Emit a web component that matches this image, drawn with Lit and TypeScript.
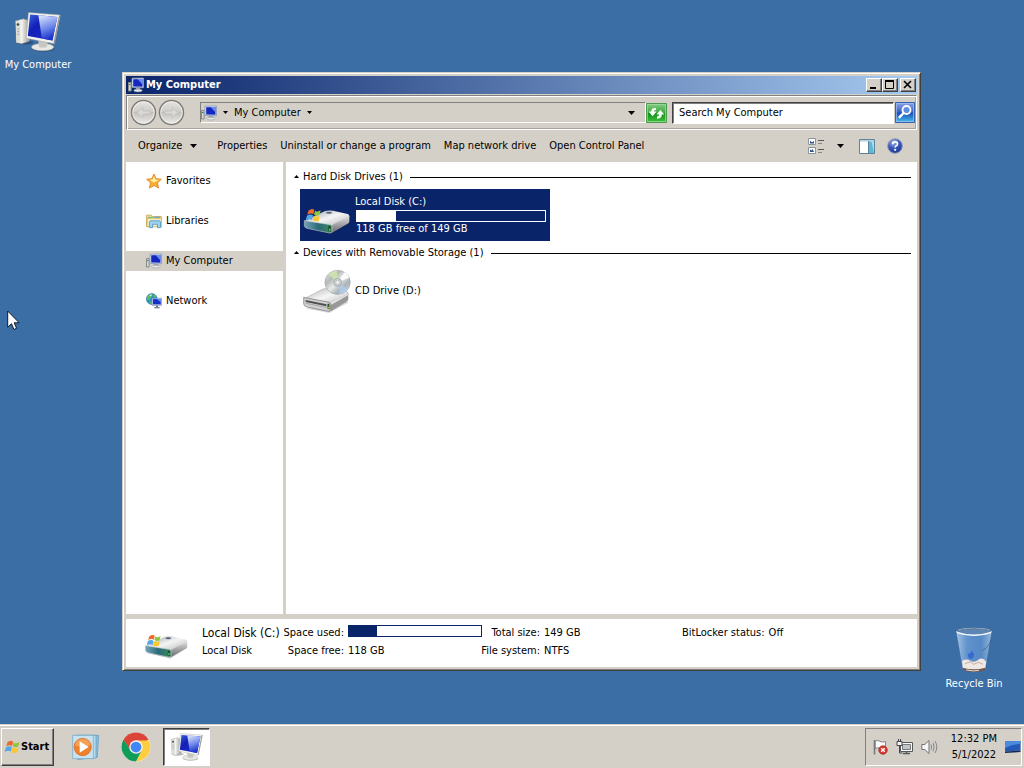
import { LitElement, html, svg, css } from "lit";
import { customElement, state } from "lit/decorators.js";

/* ---------- icons ---------- */

const computerLarge = (w: number, h: number) => html`<svg width=${w} height=${h} viewBox="46 34 140 120" aria-hidden="true">
  <defs>
    <linearGradient id="scr" x1="0" y1="0" x2="1" y2="1"><stop offset="0" stop-color="#3a62e0"/><stop offset=".35" stop-color="#1420b8"/><stop offset="1" stop-color="#1a2fc8"/></linearGradient>
    <linearGradient id="shine" x1="0" y1="0" x2=".3" y2="1"><stop offset="0" stop-color="#e4ecff"/><stop offset=".6" stop-color="#6c86e8"/><stop offset="1" stop-color="#1c34cc"/></linearGradient>
    <linearGradient id="tower" x1="0" x2="1"><stop offset="0" stop-color="#c9c9c4"/><stop offset=".4" stop-color="#f6f6f2"/><stop offset="1" stop-color="#9c9c98"/></linearGradient>
  </defs>
  <ellipse cx="76" cy="126" rx="26" ry="6" fill="#000" opacity=".25"/>
  <path d="M48 60L72 54L90 60V122L66 130L50 126Z" fill="url(#tower)" stroke="#8a8a86" stroke-width="1.5"/>
  <path d="M48 60L62 64V128L50 126Z" fill="#deded8"/>
  <circle cx="55" cy="71" r="4" fill="#3d4a44"/><path d="M52 84l7 2M52 92l7 2M52 100l7 2" stroke="#8c8c88" stroke-width="2"/>
  <ellipse cx="132" cy="145" rx="34" ry="9" fill="#000" opacity=".25"/>
  <ellipse cx="130" cy="140" rx="34" ry="11" fill="#e9e9e4" stroke="#a9a9a4" stroke-width="1.5"/>
  <path d="M116 118L146 124L142 141H120Z" fill="#c6c6c2"/>
  <path d="M87 35L184 42L166 130L80 113Z" fill="#f1f1ee" stroke="#a5a5a0" stroke-width="1.5"/>
  <path d="M184 42L180 44L163 128L166 130Z" fill="#8e8e8c"/>
  <path d="M92 41L175 48L160 120L85 106Z" fill="url(#scr)"/>
  <path d="M117 43L175 48L160 120L128 114Z" fill="url(#shine)"/>
</svg>`;

const computerSmall = html`<svg width="16" height="16" viewBox="0 0 16 16" aria-hidden="true">
  <path d="M.5 5.5h2.6v8.5H.5z" fill="#d5d9d2" stroke="#858c88"/><path d="M1 7.5h1.5" stroke="#3b7c54"/>
  <path d="M4 1.2L15.5 1v9.8L4 10.4z" fill="#dce6f8" stroke="#8796b8" stroke-width=".8"/>
  <path d="M5.2 2.2L14.5 2v7.8l-9.3-.4z" fill="#1428c0"/><path d="M9.5 2.1l5-.1v5.5z" fill="#6d8cf0"/>
  <path d="M8 11h4l.6 2H7.4z" fill="#9ea4a8"/><ellipse cx="10" cy="13.6" rx="4.2" ry="1.4" fill="#e6e8ea" stroke="#8e959c" stroke-width=".6"/>
</svg>`;

const flag = svg`
  <path d="M66 151C75 145 80 145 84 149L81 162C75 158 69 160 63 163Z" fill="#ee6a2c"/>
  <path d="M86 151C92 155 97 154 103 150L100 163C94 167 89 167 83 163Z" fill="#8fc63f"/>
  <path d="M62 166C68 162 74 161 80 165L77 179C71 175 65 176 58 180Z" fill="#55a6e8"/>
  <path d="M82 166C88 170 94 170 100 166L97 181C91 185 85 184 79 180Z" fill="#fbc62f"/>`;

const hardDrive = (w: number, h: number) => html`<svg width=${w} height=${h} viewBox="50 140 144 84" aria-hidden="true">
  <defs>
    <linearGradient id="hdTop" x1="0" y1="0" x2="1" y2="1"><stop offset="0" stop-color="#8f999f"/><stop offset=".5" stop-color="#f4f4f4"/><stop offset="1" stop-color="#b4b6ba"/></linearGradient>
    <linearGradient id="hdFront" x1="0" x2="1"><stop offset="0" stop-color="#73a3b8"/><stop offset=".5" stop-color="#2b6b7a"/><stop offset="1" stop-color="#3f8a5c"/></linearGradient>
    <linearGradient id="hdSide" x1="0" y1="0" x2="0" y2="1"><stop offset="0" stop-color="#e2e2e2"/><stop offset="1" stop-color="#66686c"/></linearGradient>
  </defs>
  <path d="M56 204L134 222L190 188L180 184L130 212Z" fill="#000" opacity=".22"/>
  <path d="M55 182L116 152Q126 149 140 151L184 161Q190 163 189 169L136 197Z" fill="url(#hdTop)"/>
  <path d="M136 195L189 167V184Q188 188 184 190L138 217Q132 219 133 210Z" fill="url(#hdSide)"/>
  <path d="M54 181L132 193Q137 195 137 200V214Q136 219 130 218L62 204Q55 202 54 196Z" fill="url(#hdFront)" stroke="#b8c6ca" stroke-width="2"/>
  <path d="M126 197h7v17l-7-2z" fill="#174d30"/><path d="M128 205h4v6h-4z" fill="#5bd65a"/>
  <ellipse cx="128" cy="157" rx="9" ry="3" fill="#56657c"/>
  ${flag}
</svg>`;

const cdDrive = html`<svg width="48" height="44" viewBox="52 329 147 135" aria-hidden="true">
  <defs>
    <linearGradient id="cd" x1="0" y1="0" x2="1" y2="1"><stop offset="0" stop-color="#eceeec"/><stop offset=".3" stop-color="#b4b9b7"/><stop offset=".5" stop-color="#e8ebe9"/><stop offset=".7" stop-color="#a9b4ba"/><stop offset="1" stop-color="#dcdce2"/></linearGradient>
    <linearGradient id="cdTop" x1="0" y1="0" x2="1" y2="1"><stop offset="0" stop-color="#b4b4b4"/><stop offset=".5" stop-color="#f6f6f6"/><stop offset="1" stop-color="#b4b4b4"/></linearGradient>
  </defs>
  <path d="M60 450L132 464L192 432L180 424Z" fill="#000" opacity=".15"/>
  <path d="M56 420L112 391Q120 388 132 390L184 398Q192 400 191 406L136 437Z" fill="url(#cdTop)" stroke="#969696" stroke-width="1.5"/>
  <ellipse cx="158" cy="370" rx="39" ry="37" fill="url(#cd)" stroke="#949a9a" stroke-width="1.5"/>
  <path d="M158 370L130 345Q142 334 156 334Z" fill="#d0e8ac" opacity=".8"/><path d="M158 370L190 391Q180 404 166 406Z" fill="#b0cce8" opacity=".8"/><path d="M158 370L194 356Q190 344 180 338Z" fill="#fff" opacity=".9"/>
  <circle cx="158" cy="370" r="12" fill="#d0d4d4" stroke="#8c9194" stroke-width="2"/><circle cx="158" cy="370" r="5" fill="#fff" stroke="#888" stroke-width="1"/>
  <path d="M136 432L191 404V422Q190 427 184 430L140 457Q134 460 134 450Z" fill="#989898"/>
  <path d="M136 432L191 404V409L136 440Z" fill="#e2e2e2"/>
  <path d="M54 416L132 431Q137 433 137 438V454Q136 460 130 459L62 445Q55 443 54 436Z" fill="#d0d0d0" stroke="#707070" stroke-width="2"/>
  <path d="M60 424L124 437V443L60 430Z" fill="#505050"/><path d="M60 434L124 447" stroke="#909090" stroke-width="2"/>
  <path d="M127 436h6v17l-6-2z" fill="#2d4a26"/><path d="M128 445h4v5h-4z" fill="#8dd84a"/>
</svg>`;

const star = html`<svg width="16" height="16" viewBox="0 0 16 16" aria-hidden="true"><path d="M8 1l2.1 4.7 5.2.6-3.8 3.5 1 5.2L8 12.5 3.5 15l1-5.2L.7 6.3l5.2-.6z" fill="#fbb034" stroke="#df8326" stroke-width=".9"/><path d="M8 3.2l1.4 3.3 3.4.4L8 9.5 3.4 6.9l3.2-.4z" fill="#fff0a0"/></svg>`;

const libraries = html`<svg width="16" height="16" viewBox="0 0 16 16" aria-hidden="true"><path d="M.6 14V2.2h4.8l1 1.3h9V6" fill="#f5e2a0" stroke="#c7a957" stroke-width=".9"/><path d="M1 5.2h14.4v8.6H1z" fill="#f9edbd" stroke="#c7a957" stroke-width=".8"/><path d="M2 4.3h5" stroke="#6eb568"/><path d="M8 4.3h6" stroke="#5e9dd4"/><path d="M3.4 14.7V9.2q0-1.4 1.4-1.4h8.3q1.4 0 1.4 1.4v5.5h-3v-3.4h-5v3.4z" fill="#9ad2f2" stroke="#4b93c6" stroke-width=".8"/></svg>`;

const network = html`<svg width="16" height="16" viewBox="0 0 16 16" aria-hidden="true"><circle cx="5.8" cy="6" r="5.4" fill="#2c8fd0" stroke="#2470a4" stroke-width=".6"/><path d="M2 2.600Q4 .8 6.400 1L6 3.400 4 5l-.4 2.600L1 6.400Q.8 4 2 2.600zM7.500 1.200q2 .6 3 2.400L8 4.400zM3 8.400l2.600.4.6 2.400Q4 11 3 8.400z" fill="#5fc256"/><path d="M3.500 2.200Q5 1.300 6 1.800L4.800 3.200z" fill="#e4f8e4"/><path d="M6 5.300h9.600v7H6z" fill="#dbe6fb" stroke="#7286ac" stroke-width=".7"/><path d="M6.900 6.100h7.900v5.300H6.900z" fill="#1431c8"/><path d="M11 6.100h3.800v3.400z" fill="#7292f0"/><path d="M10 12.500h2v1.600h1.600v1.200H8.400v-1.200H10z" fill="#6d7c94"/></svg>`;

const orb = (right: boolean) => html`<svg width="27" height="27" viewBox="0 0 27 27" aria-hidden="true">
  <defs><linearGradient id="orb" x1="0" y1="0" x2="0" y2="1"><stop offset="0" stop-color="#e6e5e2"/><stop offset=".45" stop-color="#cfcdc9"/><stop offset=".5" stop-color="#c2c0bc"/><stop offset="1" stop-color="#eeedea"/></linearGradient></defs>
  <circle cx="13.5" cy="13.5" r="12" fill="url(#orb)" stroke="#7d7c79" stroke-width="1.4"/><circle cx="13.5" cy="13.5" r="10.7" fill="none" stroke="#f2f1ee" stroke-width=".9"/>
  <path d=${right ? "M7 12h7V8.500l6 5-6 5V15H7z" : "M20 12h-7V8.500l-6 5 6 5V15h7z"} fill="#dad8d5" stroke="#bebcb8" stroke-width=".7"/></svg>`;

const refresh = html`<svg width="21" height="20" viewBox="0 0 21 20" aria-hidden="true"><defs><linearGradient id="rf" x1="0" y1="0" x2="0" y2="1"><stop offset="0" stop-color="#86ce86"/><stop offset=".48" stop-color="#3fa840"/><stop offset=".52" stop-color="#15901a"/><stop offset="1" stop-color="#3cc43a"/></linearGradient></defs>
  <path d="M.5.5h20v19H.5z" fill="url(#rf)" stroke="#4c9a4c"/><path d="M1.500 1.500h18v17h-18z" fill="none" stroke="#a6dca4" stroke-width=".7"/>
  <path d="M10 5Q5.200 4.200 5.200 8.600H2.600l4 4.600 4-4.600H7.900Q7.900 6.800 10 7zM11 15.600q4.800.4 4.800-4h2.600l-4-4.600-4 4.600h2.700q0 2-2.100 2z" fill="#f6fff4"/></svg>`;

const searchIcon = html`<svg width="20" height="21" viewBox="0 0 20 21" aria-hidden="true"><defs><linearGradient id="sg" x1="0" y1="0" x2="0" y2="1"><stop offset="0" stop-color="#8ba6e8"/><stop offset=".48" stop-color="#3a62c4"/><stop offset=".52" stop-color="#1b4bb4"/><stop offset="1" stop-color="#48c4ee"/></linearGradient></defs>
  <path d="M.5.5h19v20H.5z" fill="url(#sg)" stroke="#3b62ac"/><path d="M1.500 1.500h17v18h-17z" fill="none" stroke="#a5bdf0" stroke-width=".7"/>
  <circle cx="11.500" cy="8" r="4" fill="#5f8fe0" stroke="#fff" stroke-width="1.800"/><path d="M8.600 11L4.600 15.200" stroke="#fff" stroke-width="2.400" stroke-linecap="round"/></svg>`;

const viewIcon = html`<svg width="17" height="16" viewBox="0 0 17 16" aria-hidden="true"><path d="M.5.5h7v6h-7zM.5 9.500h7v6h-7z" fill="#fff" stroke="#8c949c"/><path d="M2 5.500v-3l1.500 1.500h1.200l1.300-1v2.500zM2 14v-2.500l1.500 1 1-1.500 1.500 3z" fill="#2f4f86"/><path d="M10 2.500h6M10 11.500h6" stroke="#55595e"/><path d="M10 5.500h4M10 14.500h4" stroke="#85898e"/></svg>`;

const paneIcon = html`<svg width="16" height="15" viewBox="0 0 16 15" aria-hidden="true"><path d="M.5.5h15v14H.5z" fill="#fff" stroke="#5d8299"/><path d="M1 1h14v1.600H1z" fill="#b4d4e4"/><path d="M10 2.500h5V14h-5z" fill="#5cb8d4"/><path d="M12.500 2.500H15V14z" fill="#a4e0ee"/><path d="M9.500 2v12" stroke="#5d8299"/></svg>`;

const helpIcon = html`<svg width="16" height="16" viewBox="0 0 16 16" aria-hidden="true"><defs><radialGradient id="hp" cx=".4" cy=".25" r=".8"><stop offset="0" stop-color="#a8b8ec"/><stop offset=".5" stop-color="#3a56ba"/><stop offset="1" stop-color="#1c3490"/></radialGradient></defs><circle cx="8" cy="8" r="7.300" fill="url(#hp)" stroke="#8c98b8"/><path d="M5.600 6.200Q5.700 3.900 8.100 3.900q2.400 0 2.400 2 0 1.200-1.400 2-.9.600-.9 1.600" fill="none" stroke="#fff" stroke-width="1.600"/><circle cx="8.200" cy="11.800" r="1.100" fill="#fff"/></svg>`;

const mediaPlayer = html`<svg width="28" height="26" viewBox="218 60 84 78" aria-hidden="true">
  <path d="M236 64l62 0-4 66-56 6z" fill="#8fc0de" stroke="#5d98c0" stroke-width="2"/><path d="M228 64h62v68l-58 3z" fill="#b6daee" stroke="#5d98c0" stroke-width="2"/><path d="M220 64h62v70h-62z" fill="#c8e2f0" stroke="#6da4c8" stroke-width="2"/>
  <circle cx="250" cy="99" r="26" fill="#f0812c" stroke="#d4661c" stroke-width="2"/><path d="M226 94A25 25 0 0 1 274 92Q250 104 226 94Z" fill="#f8a860" opacity=".8"/><path d="M241 82L268 99L241 116Z" fill="#fff"/></svg>`;

const chrome = html`<svg width="30" height="30" viewBox="0 0 48 48" aria-hidden="true">
  <circle cx="24" cy="24" r="23" fill="#fff"/>
  <path d="M24 24L4.080 12.500A23 23 0 0 1 43.920 12.500Z" fill="#db4437"/><path d="M24 13.500H44.400A23 23 0 0 1 24 47L33.100 29.300Z" fill="#ffcd40"/><path d="M4.080 12.500A23 23 0 0 0 24 47L33.100 29.300L24 24L14.900 29.300Z" fill="#0f9d58"/><path d="M4.080 12.500H24V24L14.900 29.300Z" fill="#db4437"/><path d="M4.080 12.500L14.900 29.300L10 30L2 18Z" fill="#0f9d58"/>
  <circle cx="24" cy="24" r="10.800" fill="#f1f1f1"/><circle cx="24" cy="24" r="8.600" fill="#4285f4"/></svg>`;

const startFlag = html`<svg width="16" height="16" viewBox="56 143 49 44" aria-hidden="true">${flag}</svg>`;

const trayFlag = html`<svg width="16" height="16" viewBox="0 0 16 16" aria-hidden="true"><path d="M2.500 1v14.500" stroke="#77797c" stroke-width="1.600"/><path d="M3.300 2Q6 .800 8 2.300t5.500.200v7Q10.500 11 8 9.400t-4.700.2z" fill="#fafafa" stroke="#77797c" stroke-width=".9"/><circle cx="11" cy="11" r="4.300" fill="#d8362e" stroke="#9c1e1a" stroke-width=".6"/><path d="M9.200 9.200l3.600 3.600M12.800 9.200l-3.600 3.600" stroke="#fff" stroke-width="1.400"/></svg>`;
const trayNet = html`<svg width="17" height="16" viewBox="0 0 17 16" aria-hidden="true"><path d="M4.500 3.500h12v9h-12z" fill="#f8f8f8" stroke="#55585b"/><path d="M6.500 5.500h8v5h-8z" fill="#c4c4c4" stroke="#77797c"/><path d="M7 14.500h7M10.500 12.500v2" stroke="#55585b" stroke-width="1.400"/><path d="M1 2.500h5v4H1z" fill="#f4f4f4" stroke="#44474a"/><path d="M2.500 0v2.500M4.500 0v2.500M3.500 6.500v7.500h3" fill="none" stroke="#44474a"/></svg>`;
const traySound = html`<svg width="17" height="16" viewBox="0 0 17 16" aria-hidden="true"><path d="M.8 5.500h3L8 1.500v13l-4.200-4h-3z" fill="#f6f6f6" stroke="#707376" stroke-width="1"/><path d="M10 5.500q1.400 2.500 0 5M12 3.700q2.400 4.300 0 8.600M14 2q3.600 6 0 12" fill="none" stroke="#85888b" stroke-width="1"/></svg>`;
const showDesktop = html`<svg width="16" height="14" viewBox="0 0 16 14" aria-hidden="true"><path d="M0 1h15.500v9.500L0 11.500z" fill="#2459b8"/><path d="M0 1h15.500v3Q8 4 0 8z" fill="#4d8ade"/><path d="M0 11.500l15.500-1v1.600L0 13z" fill="#12284e"/></svg>`;

const bin = html`<svg width="38" height="46" viewBox="78 46 114 138" aria-hidden="true">
  <defs><linearGradient id="bn" x1="0" x2="1"><stop offset="0" stop-color="#b9d2ec" stop-opacity=".85"/><stop offset=".3" stop-color="#6a9cd8" stop-opacity=".8"/><stop offset=".7" stop-color="#5c90cc" stop-opacity=".8"/><stop offset="1" stop-color="#a6c4e2" stop-opacity=".85"/></linearGradient></defs>
  <path d="M82 60L102 174Q135 186 168 174L188 60Z" fill="url(#bn)"/>
  <path d="M99 148Q112 140 124 147T148 144T172 150L168 172Q135 184 102 172Z" fill="#efe7e2"/><path d="M108 156l16-6 10 8 14-6 14 6" fill="none" stroke="#c4aca4" stroke-width="3"/>
  <path d="M101 168Q135 178 169 168L168 176Q135 188 102 176Z" fill="#6c5a54"/><path d="M112 175Q135 180 150 176" stroke="#e6dcd8" stroke-width="3" fill="none"/>
  <path d="M116 128l10-6 10 6-4 12-12 2z" fill="#2c5cd0" opacity=".75"/><path d="M128 118l4 8" stroke="#2c5cd0" stroke-width="3"/>
  <path d="M186 84Q180 108 160 116" stroke="#39588a" stroke-width="2" fill="none"/>
  <ellipse cx="135" cy="60" rx="53" ry="10" fill="#5d86b4" stroke="#c9d8e6" stroke-width="3"/><path d="M84 62Q135 80 186 62" fill="none" stroke="#f4f8fb" stroke-width="4"/><path d="M83 57Q135 44 187 57" stroke="#4a5e74" stroke-width="2" fill="none"/></svg>`;

const cursor = html`<svg class="cursor" width="14" height="22" viewBox="0 0 14 22" aria-hidden="true"><path d="M.7 1v16.200l3.800-3.500 2.400 5.800 2.700-1.200-2.400-5.500h5z" fill="#fff" stroke="#101828" stroke-width="1"/></svg>`;

const down = html`<svg width="7" height="4" viewBox="0 0 7 4" aria-hidden="true"><path d="M0 0h7L3.500 4z"/></svg>`;
const downSmall = html`<svg width="5" height="3" viewBox="0 0 5 3" aria-hidden="true"><path d="M0 0h5L2.500 3z"/></svg>`;
const up = html`<svg width="5" height="3" viewBox="0 0 5 3" aria-hidden="true"><path d="M0 3h5L2.500 0z"/></svg>`;

@customElement("app-root")
export class AppRoot extends LitElement {
  static styles = css`
    :host { display: flex; flex-direction: column; height: 100vh; min-height: 400px; overflow: hidden; background: #3b6ea5; color: #000; font: 11px/16px "DejaVu Sans Condensed", "Noto Sans", sans-serif; cursor: default; }
    * { box-sizing: border-box; }
    svg { display: block; flex: none; }
    button { font: inherit; color: inherit; border: 0; padding: 0; margin: 0; background: none; display: flex; align-items: center; white-space: nowrap; }
    a { color: inherit; text-decoration: none; }
    ul { list-style: none; margin: 0; padding: 0; }
    h1, h2 { font: inherit; margin: 0; }
    .desktop { position: relative; flex: 1; min-height: 0; }
    .shortcut { position: absolute; width: 76px; flex-direction: column; gap: 5px; color: #fff; }
    .pc { left: 0; top: 12px; }
    .trash { right: 12px; bottom: 32px; gap: 3px; }
    .cursor { position: absolute; left: 7px; top: 310px; }

    .window { position: absolute; inset: 72px 103px 53px 122px; display: flex; flex-direction: column; padding: 3px 3px 3px 3px; background: #d4d0c8; border: 1px solid; border-color: #d4d0c8 #404040 #404040 #d4d0c8; box-shadow: inset 1px 1px #fff, inset -1px -1px #808080; }
    .title { display: flex; align-items: center; gap: 2px; height: 18px; flex: none; padding: 0 1px 0 2px; color: #fff; background: linear-gradient(90deg, #0a246a, #a6caf0); }
    .title h1 { flex: 1; font-weight: 700; }
    .wins { display: flex; }
    .win { width: 16px; height: 14px; background: #d4d0c8; border: 1px solid; border-color: #fff #404040 #404040 #fff; box-shadow: inset -1px -1px #808080; justify-content: center; }
    .close { margin-left: 2px; }

    .address { display: flex; align-items: center; flex: none; height: 35px; margin-top: 1px; padding: 0 1px 0 3px; border: 1px solid; border-color: #808080 #fff #fff #808080; box-shadow: inset 1px 1px #fff, inset -1px -1px #a8a49c; }
    .orbs { display: flex; gap: 1px; margin-right: 15px; }
    .crumbs { flex: 1; display: flex; align-items: center; height: 21px; padding: 0 10px 0 0; gap: 6px; border: 1px solid; border-color: #808080 #fff #fff #808080; }
    .push { margin-left: auto; }
    .refresh { margin: 0 5px 0 0; }
    .search { display: flex; align-items: center; flex: 0 1 243px; gap: 1px; }
    .search input { flex: 1; min-width: 0; height: 22px; font: inherit; color: #000; background: #fff; border: 1px solid; border-color: #404040 #fff #fff #404040; box-shadow: inset 1px 1px #808080; padding: 0 6px; outline: 0; border-radius: 0; }
    .search input::placeholder { color: #000; opacity: 1; }

    .commands { display: flex; align-items: center; flex: none; height: 32px; padding: 0 14px 0 12px; gap: 13px; }
    .organize { gap: 8px; margin-right: 7px; }
    .tools { display: flex; align-items: center; gap: 12px; margin-left: auto; }
    .more { margin-right: 3px; }

    .main { flex: 1; display: flex; min-height: 0; background: #fff; }
    .nav { flex: none; width: 160px; padding-top: 9px; border-right: 3px solid #d4d0c8; }
    .nav ul { display: flex; flex-direction: column; gap: 20px; }
    .nav a { display: flex; align-items: center; gap: 4px; height: 20px; padding-left: 20px; }
    .nav a.current { background: #d4d0c8; }
    .files { flex: 1; min-width: 0; padding: 3px 6px 0 8px; }
    .group { display: flex; align-items: center; height: 24px; gap: 4px; }
    .group svg { margin-bottom: 2px; }
    .group::after { content: ""; flex: 1; height: 1px; margin-left: 3px; background: #000; }
    .item { width: 250px; height: 52px; margin-left: 6px; padding: 0 4px 0 3px; gap: 4px; text-align: left; }
    .item.selected { background: #0a246a; color: #fff; }
    .item.selected svg { align-self: flex-end; margin-bottom: 6px; }
    .info { display: flex; flex-direction: column; flex: 1; }
    .info .bar { margin: 0 0 0 1px; }
    .bar { display: block; height: 12px; border: 1px solid currentColor; }
    .fill { display: block; height: 100%; background: currentColor; }
    .free { padding-left: 1px; margin-top: -1px; }

    .details { flex: none; display: flex; align-items: center; height: 53px; padding: 0 0 3px 18px; background: #fff; border-top: 5px solid #d4d0c8; }
    .details > svg { margin-top: 8px; }
    .facts { display: grid; grid-template-columns: 78px 60px 134px 54px 134px auto 1fr; column-gap: 4px; row-gap: 2px; align-items: center; flex: 1; padding-left: 13px; }
    .facts > * { white-space: nowrap; }
    .name { font-size: 12px; }
    .label { justify-self: end; }
    .facts .bar { align-self: start; color: #0a246a; }
    .kind { grid-column: 1; }

    .taskbar { display: flex; align-items: center; flex: none; height: 44px; padding: 3px 2px 2px 1px; background: #d4d0c8; border-top: 1px solid #d4d0c8; box-shadow: inset 0 1px #fff; }
    .start { align-self: stretch; width: 53px; padding: 0 2px; gap: 1px; font-weight: 700; border: 1px solid; border-color: #fff #404040 #404040 #fff; box-shadow: inset -1px -1px #808080; }
    .quick { display: flex; align-self: stretch; margin-left: 7px; }
    .task { width: 50px; justify-content: center; }
    .active { width: 47px; margin-left: 2px; background: #fff; border: 1px solid; border-color: #404040 #fff #fff #404040; box-shadow: inset 1px 1px #808080; }
    .tray { margin-left: auto; align-self: stretch; display: flex; align-items: center; gap: 8px; padding: 0 0 0 6px; border: 1px solid; border-color: #808080 #fff #fff #808080; }
    .clock { text-align: center; margin-left: 5px; }
  `;

  @state() private place = "My Computer";
  @state() private query = "";

  private places = [
    { name: "Favorites", icon: star },
    { name: "Libraries", icon: libraries },
    { name: "My Computer", icon: computerSmall },
    { name: "Network", icon: network },
  ];

  render() {
    return html`
      <main class="desktop">
        <button class="shortcut pc">${computerLarge(46, 40)}<span>My Computer</span></button>
        <button class="shortcut trash">${bin}<span>Recycle Bin</span></button>
        <section class="window" aria-label="My Computer">
          <header class="title">
            ${computerSmall}
            <h1>My Computer</h1>
            <div class="wins">
              <button class="win" aria-label="Minimize"><svg width="10" height="10"><path d="M1 7h6v2H1z"/></svg></button>
              <button class="win" aria-label="Maximize"><svg width="10" height="10"><path d="M.5 1.500h8v7h-8z" fill="none" stroke="#000"/><path d="M0 0h9v2H0z"/></svg></button>
              <button class="win close" aria-label="Close"><svg width="10" height="10"><path d="M1 1l7 7M8 1l-7 7" stroke="#000" stroke-width="1.600"/></svg></button>
            </div>
          </header>
          <div class="address">
            <div class="orbs">
              <button aria-label="Back">${orb(false)}</button>
              <button aria-label="Forward">${orb(true)}</button>
            </div>
            <nav class="crumbs" aria-label="Address">
              ${computerSmall}
              <button aria-label="Roots">${downSmall}</button>
              <a href="#computer">My Computer</a>
              <button aria-label="Folders">${downSmall}</button>
              <button class="push" aria-label="Previous locations">${down}</button>
            </nav>
            <button class="refresh" aria-label="Refresh">${refresh}</button>
            <div class="search">
              <input type="text" aria-label="Search" placeholder="Search My Computer" .value=${this.query}
                @input=${(e: Event) => (this.query = (e.target as HTMLInputElement).value)} />
              <button aria-label="Search">${searchIcon}</button>
            </div>
          </div>
          <div class="commands">
            <button class="organize">Organize ${down}</button>
            <button>Properties</button>
            <button>Uninstall or change a program</button>
            <button>Map network drive</button>
            <button>Open Control Panel</button>
            <div class="tools">
              <button aria-label="Change view">${viewIcon}</button>
              <button class="more" aria-label="More views">${down}</button>
              <button aria-label="Preview pane">${paneIcon}</button>
              <button aria-label="Help">${helpIcon}</button>
            </div>
          </div>
          <div class="main">
            <nav class="nav" aria-label="Places">
              <ul>
                ${this.places.map((p) => html`<li><a href="#" class=${p.name === this.place ? "current" : ""}
                  @click=${(e: Event) => { e.preventDefault(); this.place = p.name; }}>${p.icon}${p.name}</a></li>`)}
              </ul>
            </nav>
            <div class="files">
              <h2 class="group">${up}Hard Disk Drives (1)</h2>
              <button class="item selected">
                ${hardDrive(48, 28)}
                <span class="info">
                  <span>Local Disk (C:)</span>
                  <span class="bar"><span class="fill" style="width:21%"></span></span>
                  <span class="free">118 GB free of 149 GB</span>
                </span>
              </button>
              <h2 class="group">${up}Devices with Removable Storage (1)</h2>
              <button class="item">${cdDrive}<span>CD Drive (D:)</span></button>
            </div>
          </div>
          <footer class="details">
            ${hardDrive(45, 26)}
            <div class="facts">
              <span class="name">Local Disk (C:)</span>
              <span class="label">Space used:</span>
              <span class="bar"><span class="fill" style="width:21%"></span></span>
              <span class="label">Total size:</span>
              <span>149 GB</span>
              <span class="label">BitLocker status:</span>
              <span>Off</span>
              <span class="kind">Local Disk</span>
              <span class="label">Space free:</span>
              <span>118 GB</span>
              <span class="label">File system:</span>
              <span>NTFS</span>
            </div>
          </footer>
        </section>
        ${cursor}
      </main>
      <footer class="taskbar">
        <button class="start">${startFlag}Start</button>
        <div class="quick">
          <button class="task" aria-label="Media Player">${mediaPlayer}</button>
          <button class="task" aria-label="Chrome">${chrome}</button>
          <button class="task active" aria-label="My Computer">${computerLarge(32, 28)}</button>
        </div>
        <div class="tray">
          ${trayFlag}${trayNet}${traySound}
          <time class="clock">12:32 PM<br />5/1/2022</time>
          <button aria-label="Show desktop">${showDesktop}</button>
        </div>
      </footer>
    `;
  }
}
